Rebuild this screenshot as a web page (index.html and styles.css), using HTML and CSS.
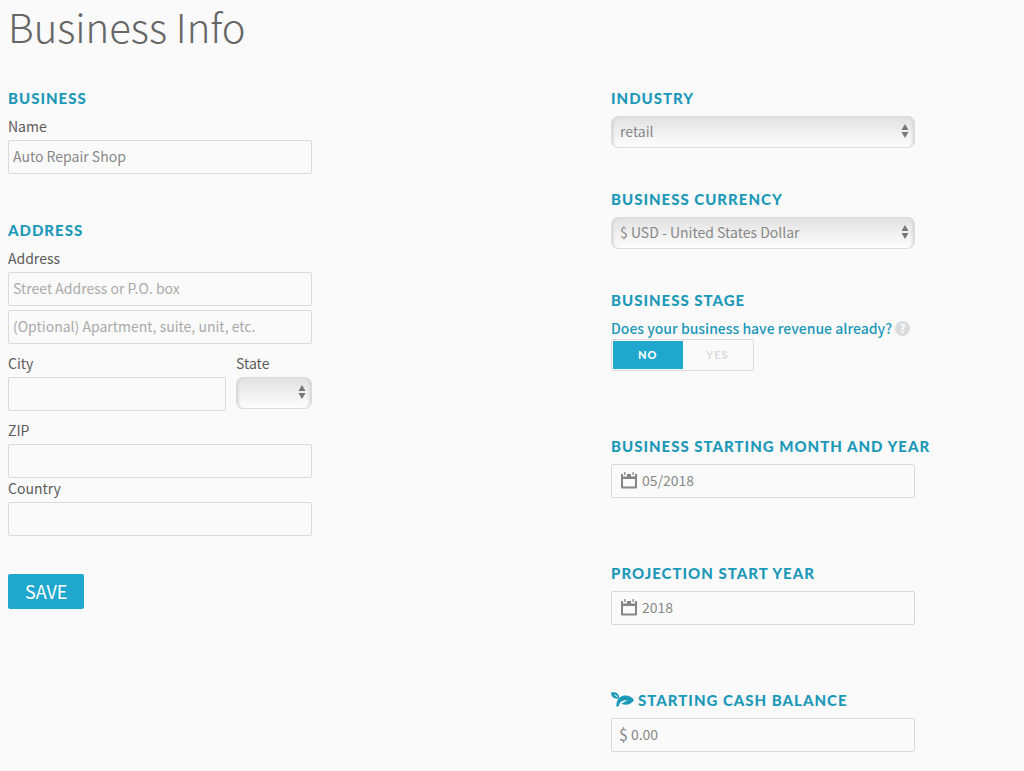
FILE: index.html
```html
<!DOCTYPE html>
<html lang="en">
<head>
<meta charset="utf-8">
<meta name="viewport" content="width=device-width, initial-scale=1">
<title>Business Info</title>
<link rel="stylesheet" href="styles.css">
</head>
<body>
<svg class="symbols" aria-hidden="true">
  <symbol id="calendar" viewBox="0 0 16 17">
    <path fill-rule="evenodd" d="M0 2h2v2.500h12V2h2v13.500a1 1 0 0 1-1 1H1a1 1 0 0 1-1-1zM2 7v7.500h12V7z"/>
    <path d="M3.200 0h1.300v3H3.200zM11.500 0h1.300v3h-1.300zM6 2h4v3H6z"/>
  </symbol>
  <symbol id="arrows" viewBox="0 0 8 14">
    <path d="M4 0l3.500 6h-7zM4 14l3.500-6h-7z"/>
  </symbol>
  <symbol id="sprout" viewBox="0 0 23 16">
    <path fill-rule="evenodd" d="M0 .5C4.500-.6 8.500 1 8 6.500 3 7.200.2 5 0 .5zM3 2.500l3.500 3.200C6.500 3.800 5 2.700 3 2.500z"/>
    <path d="M5.300 14.500C5.300 7.500 9 4 13.500 3.600c4-.3 7.500 1.400 9.500 4.400-2.500 4.700-8.500 6-12.800 3.700l6.300-3.400C12 7.500 8.300 9.500 7.800 14.500z"/>
  </symbol>
</svg>
<main class="page">
  <h1 class="title">Business Info</h1>
  <form class="columns">
    <div class="column">
      <section class="section">
        <h2 class="heading">Business</h2>
        <div class="field">
          <label class="label" for="name">Name</label>
          <input class="box" id="name" type="text" value="Auto Repair Shop">
        </div>
      </section>
      <section class="section">
        <h2 class="heading">Address</h2>
        <div class="field">
          <label class="label" for="street">Address</label>
          <input class="box" id="street" type="text" placeholder="Street Address or P.O. box">
          <input class="box" type="text" aria-label="Address line 2" placeholder="(Optional) Apartment, suite, unit, etc.">
        </div>
        <div class="row">
          <div class="field grow">
            <label class="label" for="city">City</label>
            <input class="box" id="city" type="text">
          </div>
          <div class="field state">
            <label class="label" for="state">State</label>
            <div class="picker">
              <select class="select" id="state"><option></option><option>CA</option><option>NY</option></select>
              <svg class="arrows"><use href="#arrows"/></svg>
            </div>
          </div>
        </div>
        <div class="field">
          <label class="label" for="zip">ZIP</label>
          <input class="box" id="zip" type="text">
        </div>
        <div class="field">
          <label class="label" for="country">Country</label>
          <input class="box" id="country" type="text">
        </div>
      </section>
      <button class="save" type="submit">SAVE</button>
    </div>
    <div class="column">
      <section class="section compact">
        <h2 class="heading"><label for="industry">Industry</label></h2>
        <div class="picker">
          <select class="select" id="industry"><option>retail</option></select>
          <svg class="arrows"><use href="#arrows"/></svg>
        </div>
      </section>
      <section class="section compact">
        <h2 class="heading"><label for="currency">Business Currency</label></h2>
        <div class="picker">
          <select class="select" id="currency"><option>$ USD - United States Dollar</option></select>
          <svg class="arrows"><use href="#arrows"/></svg>
        </div>
      </section>
      <section class="section roomy">
        <h2 class="heading">Business Stage</h2>
        <div class="question"><span id="revenue">Does your business have revenue already?</span><button class="help" type="button" aria-label="Help">?</button></div>
        <div class="toggle" role="radiogroup" aria-labelledby="revenue">
          <input class="radio" type="radio" name="revenue" id="no" checked><label class="option" for="no">No</label>
          <input class="radio" type="radio" name="revenue" id="yes"><label class="option" for="yes">Yes</label>
        </div>
      </section>
      <section class="section roomy">
        <h2 class="heading"><label for="start">Business Starting Month and Year</label></h2>
        <div class="box group"><svg class="calendar"><use href="#calendar"/></svg><input class="bare" id="start" type="text" value="05/2018"></div>
      </section>
      <section class="section roomy">
        <h2 class="heading"><label for="projection">Projection Start Year</label></h2>
        <div class="box group"><svg class="calendar"><use href="#calendar"/></svg><input class="bare" id="projection" type="text" value="2018"></div>
      </section>
      <section class="section last">
        <h2 class="heading"><svg class="sprout"><use href="#sprout"/></svg><label for="cash">Starting Cash Balance</label></h2>
        <div class="box group money"><span class="dollar">$</span><input class="bare" id="cash" type="text" value="0.00"></div>
      </section>
    </div>
  </form>
</main>
</body>
</html>
```
FILE: styles.css
```css
* { box-sizing: border-box; }
body {
  margin: 0;
  background: #fafafa;
  color: #5a5a5a;
  font: 14px/20px "Noto Sans CJK SC", "Open Sans", sans-serif;
}
input, select, button { font: inherit; color: inherit; margin: 0; }
.symbols { display: none; }
.page { padding: 0 11px 16px 8px; }
.title {
  margin: 0 0 36px;
  font-size: 40px;
  line-height: 52px;
  font-weight: 300;
  color: #666;
}
.columns { display: grid; grid-template-columns: 3fr 2fr; }
.column { min-width: 0; }
.section { max-width: 304px; margin-bottom: 46px; }
.section.compact { margin-bottom: 41px; }
.section.roomy { margin-bottom: 65px; }
.section.last { margin-bottom: 0; }
.heading {
  display: flex;
  align-items: center;
  gap: 4px;
  margin: 0 0 8px;
  font: 900 15px/20px Lato, sans-serif;
  letter-spacing: 1px;
  text-transform: uppercase;
  white-space: nowrap;
  color: #1c98b9;
}
.field { display: flex; flex-direction: column; gap: 4px; }
.label { display: block; }
.box {
  width: 100%;
  height: 34px;
  padding: 0 4px 2px;
  border: 1px solid #dadada;
  border-radius: 2px;
  background: transparent;
  color: #888;
}
.box::placeholder { color: #aaa; opacity: 1; }
.row { display: flex; gap: 10px; margin: 9px 0; }
.grow { flex: 1; min-width: 0; }
.state { width: 76px; }
.picker { position: relative; }
.select {
  display: block;
  width: 100%;
  height: 32px;
  padding: 0 20px 2px 8px;
  border: 1px solid #dcdcdc;
  border-radius: 7px;
  appearance: none;
  background: linear-gradient(#e2e2e2, #fdfdfd);
  box-shadow: inset 3px 0 3px -2px #ccc, inset -3px 0 3px -2px #ccc, inset 0 -2px 2px #fff;
  color: #888;
}
.arrows {
  position: absolute;
  top: 8px;
  right: 6px;
  width: 8px;
  height: 14px;
  fill: #777;
  pointer-events: none;
}
.save {
  display: block;
  height: 35px;
  padding: 0 17px 2px;
  margin-top: -8px;
  border: 0;
  border-radius: 2px;
  background: #1fa7cd;
  color: #fff;
  font-size: 18px;
}
.question {
  display: flex;
  align-items: center;
  gap: 3px;
  margin-bottom: 1px;
  white-space: nowrap;
  font-weight: 500;
  color: #1c98b9;
}
.help {
  width: 15px;
  height: 15px;
  padding: 0;
  border: 0;
  border-radius: 50%;
  background: #dcdcdc;
  color: #fff;
  font-size: 11px;
  line-height: 15px;
  font-weight: 700;
}
.toggle {
  display: flex;
  width: 143px;
  height: 32px;
  border: 1px solid #dadada;
  border-radius: 2px;
  padding: 1px;
}
.radio { position: absolute; opacity: 0; }
.option {
  flex: 1;
  font: 900 11px/28px Lato, sans-serif;
  letter-spacing: 1px;
  text-align: center;
  text-transform: uppercase;
  color: #dcdcdc;
}
.radio:checked + .option { background: #1fa7cd; color: #fff; }
.group { display: flex; align-items: center; gap: 5px; padding: 0 9px 2px; }
.bare {
  flex: 1;
  min-width: 0;
  padding: 0;
  border: 0;
  outline: 0;
  background: transparent;
}
.calendar { width: 16px; height: 17px; fill: #858585; }
.money { gap: 3px; padding: 0 7px 2px; }
.dollar { font-size: 16px; }
.sprout { width: 23px; height: 16px; fill: currentColor; }
```
